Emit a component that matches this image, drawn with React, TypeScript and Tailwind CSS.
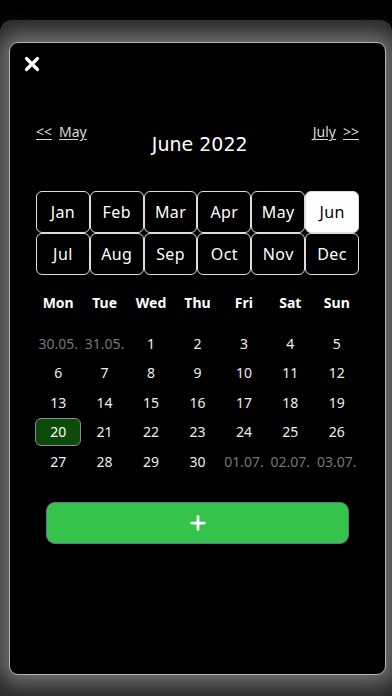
import { X, Plus } from "lucide-react";

const months = ["Jan", "Feb", "Mar", "Apr", "May", "Jun", "Jul", "Aug", "Sep", "Oct", "Nov", "Dec"];
const weekdays = ["Mon", "Tue", "Wed", "Thu", "Fri", "Sat", "Sun"];

type Day = { label: string; muted?: boolean; selected?: boolean };

const days: Day[] = [
  { label: "30.05.", muted: true },
  { label: "31.05.", muted: true },
  ...Array.from({ length: 30 }, (_, i) => ({ label: String(i + 1), selected: i + 1 === 20 })),
  { label: "01.07.", muted: true },
  { label: "02.07.", muted: true },
  { label: "03.07.", muted: true },
];

const font = { fontFamily: '"Noto Sans", "DejaVu Sans", sans-serif' };

export default function App() {
  return (
    <div className="h-[696px] w-[392px] overflow-hidden bg-black pt-[20px]" style={font}>
      <div className="h-[676px] rounded-t-[12px] bg-[#2a2a2a] pl-[9px] pr-[6px] pt-[22px]">
        <div className="h-[633px] rounded-[9px] border-[1.5px] border-[#b5b5b5] bg-black shadow-[0_0_20px_9px_rgba(160,160,160,0.6)]">
          <div className="pl-[11px] pt-[10px]">
            <X size={22} strokeWidth={3.5} className="text-white" />
          </div>

          <div className="mt-[48px] flex items-start justify-between px-[26px]">
            <div className="flex gap-[7px] text-[14px] leading-[17px] text-[#d8d8d8] underline underline-offset-2">
              <span>&lt;&lt;</span>
              <span>May</span>
            </div>
            <div
              className="mt-[9px] text-[19px] leading-[24px] text-white"
              style={{ fontFamily: '"DejaVu Sans", sans-serif' }}
            >
              June 2022
            </div>
            <div className="flex gap-[7px] text-[14px] leading-[17px] text-[#d8d8d8] underline underline-offset-2">
              <span>July</span>
              <span>&gt;&gt;</span>
            </div>
          </div>

          <div className="mt-[35px] grid grid-cols-6 px-[26px]">
            {months.map((m) => (
              <div
                key={m}
                className={`flex h-[42px] items-center justify-center rounded-[6px] border-[1.5px] border-[#ddd] text-[16px] tracking-wide ${
                  m === "Jun" ? "bg-white text-black" : "bg-black text-white"
                }`}
              >
                {m}
              </div>
            ))}
          </div>

          <div className="mt-[18px] grid grid-cols-7 px-[25px]">
            {weekdays.map((w) => (
              <div key={w} className="text-center text-[14px] font-bold leading-[20px] text-white">
                {w}
              </div>
            ))}
          </div>

          <div className="mt-[16px] grid grid-cols-7 gap-y-[1.5px] px-[25px]">
            {days.map((d, i) => (
              <div key={i} className="flex h-[28px] items-center justify-center">
                <div
                  className={`flex h-[28px] w-[46px] items-center justify-center rounded-[6px] text-[14px] ${
                    d.selected ? "border-[1.5px] border-[#8a8a8a] bg-[#0c4a0c] text-white" : ""
                  } ${d.muted ? "text-[#777]" : "text-[#eee]"}`}
                >
                  {d.label}
                </div>
              </div>
            ))}
          </div>

          <div className="mt-[27px] px-[36px]">
            <button className="flex h-[42px] w-full items-center justify-center rounded-[9px] border-[1.5px] border-[#5b7a8c] bg-[#35c34b]">
              <Plus size={22} strokeWidth={3} className="text-white" />
            </button>
          </div>
        </div>
      </div>
    </div>
  );
}
